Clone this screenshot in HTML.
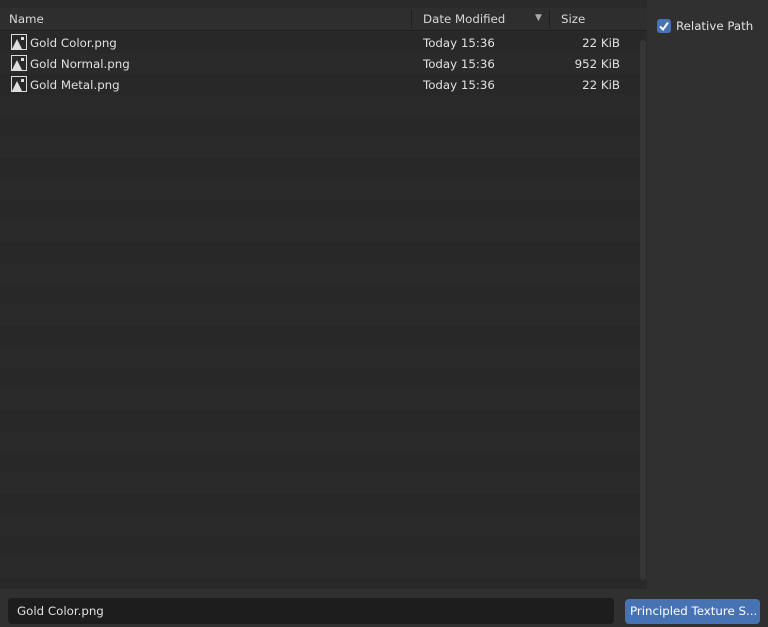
<!DOCTYPE html>
<html><head><style>
body{margin:0;width:768px;height:627px;background:#303030;font-family:"DejaVu Sans","Liberation Sans",sans-serif;font-size:11.8px;color:#e0e0e0;position:relative;overflow:hidden}
#list{position:absolute;left:0;top:0;width:647px;height:589px;background:#2a2a2a;overflow:hidden}
.hdr{position:absolute;left:0;top:8px;width:647px;height:22px;background:#2e2e2e;border-bottom:1px solid #1f1f1f}
.hdr span{position:absolute;top:4px;color:#d8d8d8}
.sep{position:absolute;top:2px;width:1px;height:18px;background:#1f1f1f}
.row{position:absolute;left:0;width:641px;height:21px}
.row.d{background:#282828}.row.l{background:#2a2a2a}
.row span{position:absolute;top:4px}
.ico{position:absolute;left:11px;top:2px;width:16px;height:16px}
.sb{position:absolute;left:640px;top:40px;width:6px;height:540px;background:#363636;border-radius:3px}
#field{position:absolute;left:8px;top:598px;width:606px;height:26px;background:#1d1d1d;border-radius:4px}
#field span{position:absolute;left:9px;top:6px}
#btn{position:absolute;left:625px;top:599px;width:135px;height:25px;background:#4772b3;border-radius:4px;color:#fff;overflow:hidden}
#btn span{position:absolute;left:5px;top:5px;white-space:nowrap}
#chk{position:absolute;left:657px;top:19px;width:14px;height:14px;background:#4772b3;border-radius:3px}
</style></head><body>
<div id="list">
<div class="hdr"><span style="left:9px">Name</span><div class="sep" style="left:411px"></div><span style="left:423px">Date Modified</span><span style="left:535px;font-size:9px;top:5px;color:#aaa">▼</span><div class="sep" style="left:549px"></div><span style="left:561px">Size</span></div>
<div id="rows"></div>
<div class="sb"></div>
</div>
<div id="chk"><svg width="14" height="14" viewBox="0 0 14 14"><path d="M3 7.5 L6 10.5 L11 3.5" stroke="#fff" stroke-width="2" fill="none"/></svg></div>
<div style="position:absolute;left:676px;top:19px">Relative Path</div>
<div id="field"><span>Gold Color.png</span></div>
<div id="btn"><span>Principled Texture S...</span></div>
<script>
var names=["Gold Color.png","Gold Normal.png","Gold Metal.png"],sizes=["22 KiB","952 KiB","22 KiB"];
var h="";for(var i=0;i<27;i++){var y=32+i*21;h+='<div class="row '+(i%2?'l':'d')+'" style="top:'+y+'px">';
if(i<3){h+='<svg class="ico" viewBox="0 0 16 16"><rect x="0.5" y="0.5" width="15" height="15" fill="none" stroke="#ddd"/><path d="M1 15 L6 5 L11 15Z" fill="#ddd"/><rect x="10" y="3" width="3" height="3" fill="#ddd"/></svg><span style="left:30px">'+names[i]+'</span><span style="left:423px">Today 15:36</span><span style="right:21px">'+sizes[i]+'</span>';}
h+='</div>';}
document.getElementById("rows").innerHTML=h;
</script>
</body></html>
